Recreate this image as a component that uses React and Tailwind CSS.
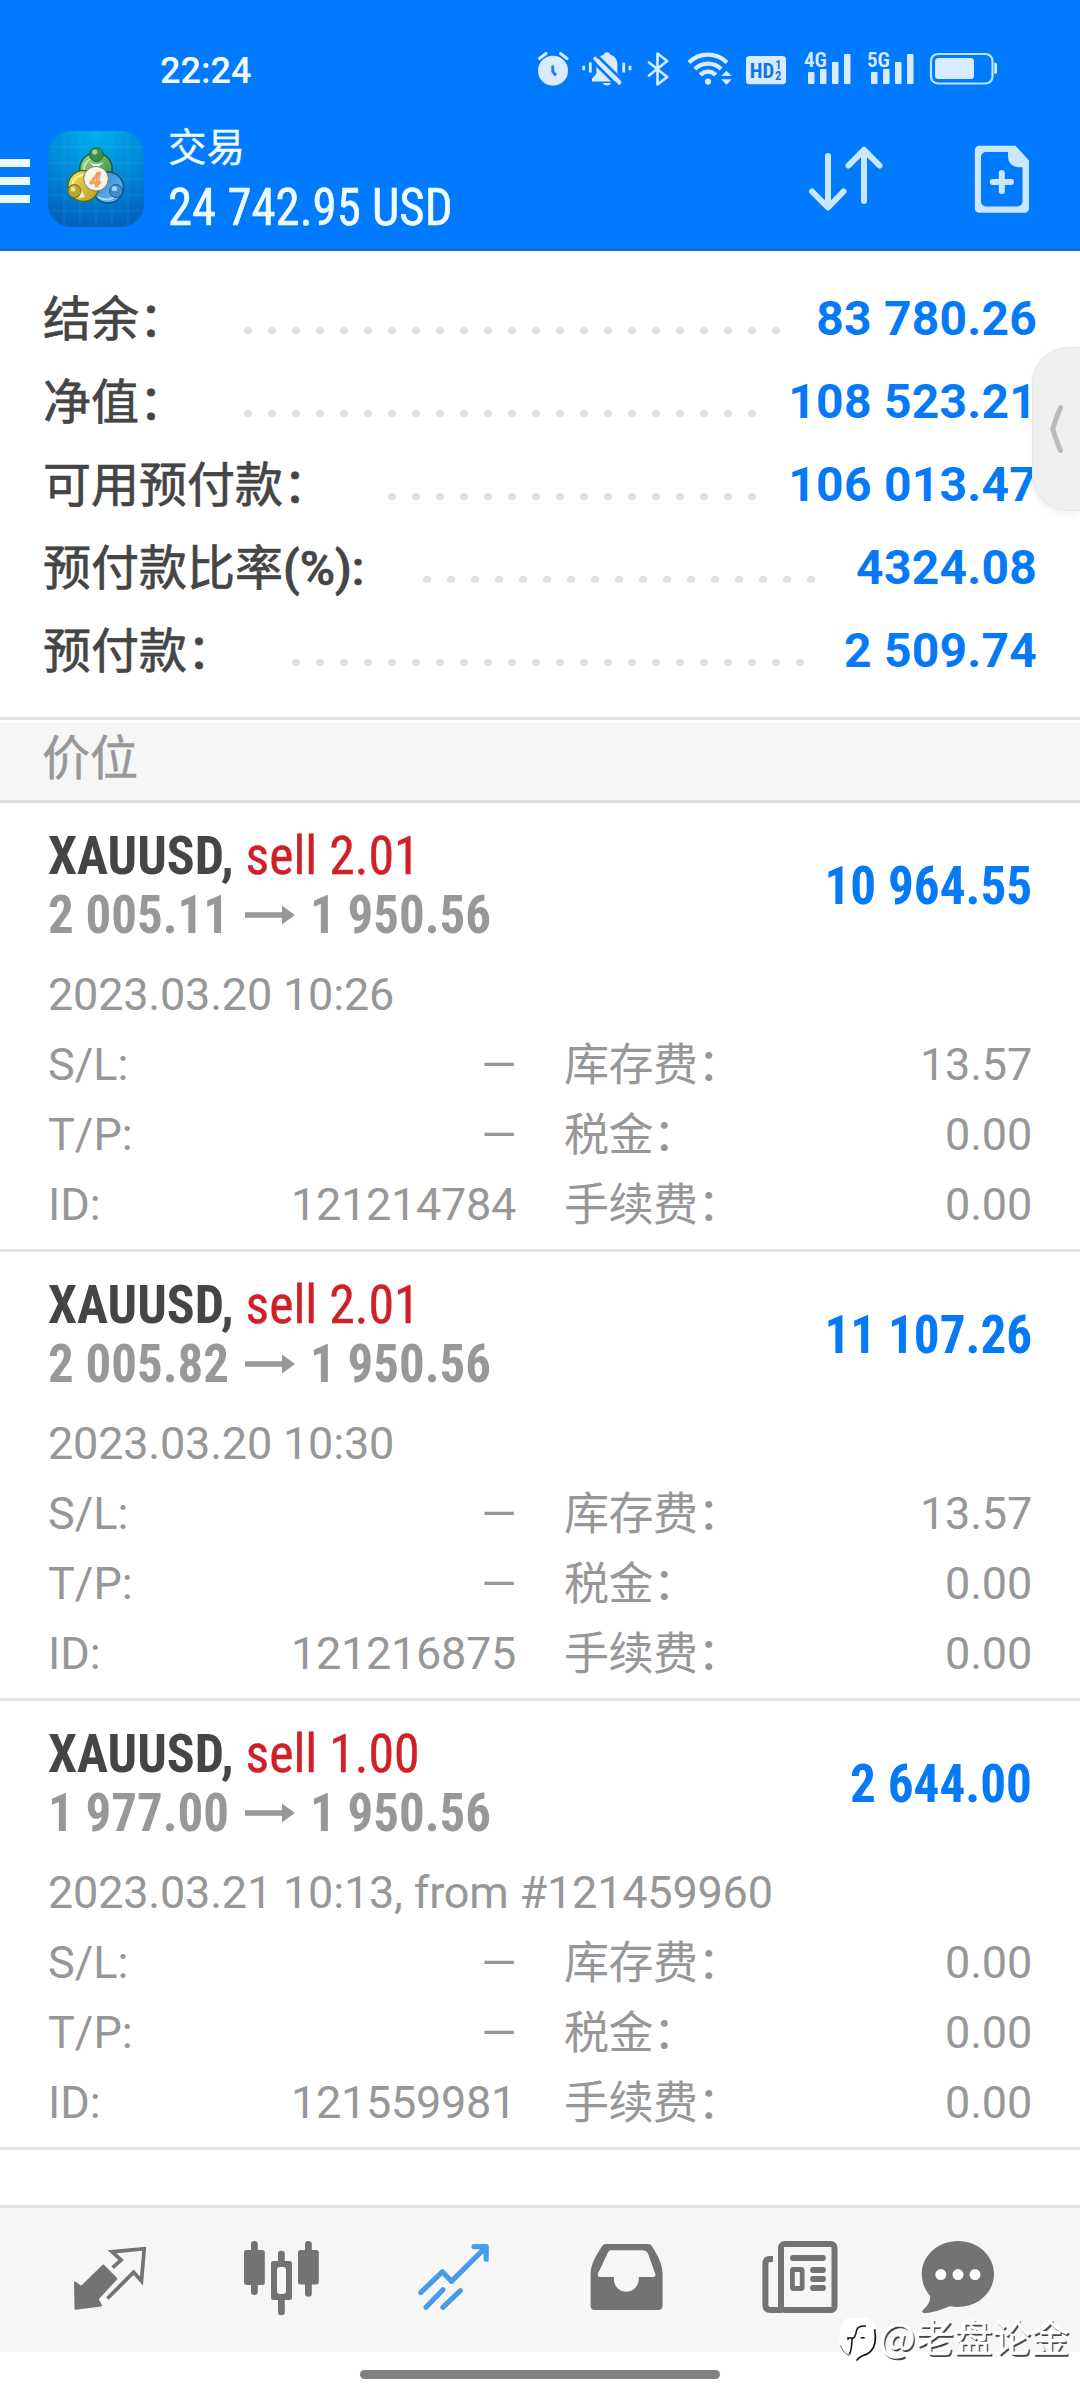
import { clsx } from 'clsx';

const summary = [
  { label: '结余', value: '83 780.26', dots: 23, offset: 'w-[193px]' },
  { label: '净值', value: '108 523.21', dots: 22, offset: 'w-[193px]' },
  { label: '可用预付款', value: '106 013.47', dots: 16, offset: 'w-[337px]' },
  { label: '预付款比率', suffix: '(%):', value: '4324.08', dots: 17, offset: 'w-[372px]' },
  { label: '预付款', value: '2 509.74', dots: 22, offset: 'w-[241px]' },
];

const positions = [
  {
    id: '121214784',
    symbol: 'XAUUSD',
    side: 'sell 2.01',
    open: '2 005.11',
    current: '1 950.56',
    profit: '10 964.55',
    time: '2023.03.20 10:26',
    swap: '13.57',
  },
  {
    id: '121216875',
    symbol: 'XAUUSD',
    side: 'sell 2.01',
    open: '2 005.82',
    current: '1 950.56',
    profit: '11 107.26',
    time: '2023.03.20 10:30',
    swap: '13.57',
  },
  {
    id: '121559981',
    symbol: 'XAUUSD',
    side: 'sell 1.00',
    open: '1 977.00',
    current: '1 950.56',
    profit: '2 644.00',
    time: '2023.03.21 10:13, from #121459960',
    swap: '0.00',
  },
];

const SignalIcon = ({ label, className }) => (
  <svg className={clsx('h-[52px] w-[50px]', className)} viewBox="-1 -6 50 52" fill="#d9ecff">
    <text x="0" y="17" fontSize="20.5" fontWeight="600" textLength="23" lengthAdjust="spacingAndGlyphs" className="font-['Roboto_Condensed']">
      {label}
    </text>
    <rect x="4" y="22" width="6.5" height="12" rx="1" />
    <rect x="16" y="19" width="6.5" height="15" rx="1" />
    <rect x="28" y="12" width="6.5" height="22" rx="1" />
    <rect x="40" y="4" width="6.5" height="30" rx="1" />
  </svg>
);

const StatusBar = () => (
  <div className="flex h-[102px] items-center pt-[38px]">
    <span className="ml-[160px] w-[378px] pt-[1px] text-[36px] leading-[48px] font-medium text-[#f2faff]">22:24</span>

    {/* Alarm */}
    <svg className="h-[40px] w-[31px]" viewBox="538 50 31 40" fill="none" stroke="#d9ecff" strokeLinecap="round">
      <circle cx="553" cy="70.7" r="15" fill="#d9ecff" stroke="none" />
      <path d="M539.5 58.5L546 53.5M560.5 53.5L567 58.5" strokeWidth="3" />
      <path d="M552.7 65.5V71.5L556 75.5" stroke="#1a7df0" strokeWidth="2.8" strokeLinecap="butt" />
    </svg>

    {/* Muted bell */}
    <svg className="ml-[13px] h-[40px] w-[50px]" viewBox="582 50 50 40" fill="#d9ecff">
      <path d="M607 52.3c1.8 0 3 1 3.2 2.3 4.4 1.4 7.2 5 7.2 9.8v8.8l4.4 5.6v2.7H592v-2.7l4.4-5.4v-9c0-4.8 3-8.4 7.4-9.8.3-1.3 1.4-2.3 3.2-2.3zM603 83h8c-.8 1.8-2 2.5-4 2.5s-3.2-.7-4-2.5z" />
      <path d="M592 60.5L619 87.5M595.5 54L623 81" stroke="#007aff" strokeWidth="2.5" />
      <path d="M594 57.5L620.5 84" stroke="#d9ecff" strokeWidth="3.2" />
      <path d="M583.7 65.8v4.4M590.3 62.5v10M623.7 62.5v10M630 65.8v4.4" stroke="#d9ecff" strokeWidth="2.8" />
    </svg>

    {/* Bluetooth */}
    <svg className="ml-[15px] h-[40px] w-[22px]" viewBox="646 50 22 40" fill="none" stroke="#d9ecff" strokeWidth="2.6" strokeLinejoin="round" strokeLinecap="round">
      <path d="M648 62.5L666.2 77L656.5 84.5V53.5L666.2 61L648 75.5" />
    </svg>

    {/* Wi-Fi */}
    <svg className="ml-[18px] h-[40px] w-[46px]" viewBox="686.5 50 46 40" fill="none" stroke="#d9ecff" strokeWidth="4.2">
      <path d="M688.5 62.5C699 52 715.5 52 726.5 62.5M694.3 69C701.5 61.7 713.5 61.7 720.7 69M699.8 75C704 70.4 711 70.4 715.2 75" />
      <circle cx="707.5" cy="81.6" r="3.1" fill="#d9ecff" stroke="none" />
      <path d="M726 70.7L731.2 76H720.8zM720.8 79.3H731.2L726 84.7z" fill="#d9ecff" stroke="none" />
    </svg>

    {/* HD voice */}
    <svg className="ml-[12px] h-[40px] w-[42px] font-['Roboto_Condensed']" viewBox="745 50 42 40" fill="#1374e4" fontWeight="700">
      <rect x="746" y="56" width="40" height="28.3" rx="3.5" fill="#d9ecff" />
      <text x="749.8" y="77.8" fontSize="21" textLength="24.5" lengthAdjust="spacingAndGlyphs">HD</text>
      <text x="775.3" y="69" fontSize="12">1</text>
      <text x="775" y="80.3" fontSize="12.5">2</text>
    </svg>

    <SignalIcon label="4G" className="ml-[16px]" />
    <SignalIcon label="5G" className="ml-[13px]" />

    {/* Battery */}
    <svg className="ml-[13px] h-[40px] w-[69px]" viewBox="929 50 69 40" fill="#d9ecff">
      <rect x="931" y="54" width="61.5" height="29.5" rx="7" fill="none" stroke="#bfe4ff" strokeWidth="2.2" />
      <rect x="935" y="58" width="39" height="21" rx="3.5" />
      <path d="M994.3 62.7h1.2a1.5 1.5 0 0 1 1.5 1.5v8a1.5 1.5 0 0 1-1.5 1.5h-1.2z" />
    </svg>
  </div>
);

const AppLogo = () => (
  <svg className="ml-[18px] mt-[29px] h-[96px] w-[96px]" viewBox="0 0 96 96">
    <defs>
      <radialGradient id="tile" cx="0.5" cy="0" r="1">
        <stop offset="0" stopColor="#00b0ee" />
        <stop offset="0.55" stopColor="#0088d6" />
        <stop offset="1" stopColor="#0063bd" />
      </radialGradient>
      <linearGradient id="green" x1="0" y1="0" x2="1" y2="1">
        <stop offset="0" stopColor="#a6d98f" />
        <stop offset="1" stopColor="#1f8a35" />
      </linearGradient>
      <linearGradient id="yellow" x1="0" y1="0" x2="1" y2="1">
        <stop offset="0" stopColor="#f0e75a" />
        <stop offset="1" stopColor="#b59a1b" />
      </linearGradient>
      <linearGradient id="blue" x1="0" y1="0" x2="1" y2="1">
        <stop offset="0" stopColor="#2b86cf" />
        <stop offset="1" stopColor="#6dbcf0" />
      </linearGradient>
    </defs>
    <rect width="96" height="96" rx="23" fill="url(#tile)" />
    <path
      d="M16 2v92M32 0v96M48 0v96M64 0v96M80 2v92M2 16h92M0 32h96M0 48h96M0 64h96M2 80h92"
      stroke="#5cc4f5"
      strokeOpacity="0.16"
      strokeWidth="1"
    />
    <circle cx="48" cy="38" r="16.3" fill="url(#green)" stroke="#1c5f3c" strokeWidth="1.5" />
    <path d="M36 42a13 13 0 0 1 6-14" fill="none" stroke="#c4e8b4" strokeWidth="2" />
    <path d="M41 31q7 4 15 0l-8 7z" fill="#dff3e6" />
    <circle cx="60" cy="56.5" r="15.5" fill="url(#blue)" stroke="#12527f" strokeWidth="1.5" />
    <path d="M50 66q10 6 19-2" fill="none" stroke="#a8daf8" strokeWidth="2" />
    <circle cx="35.5" cy="55" r="15.5" fill="url(#yellow)" stroke="#5b6428" strokeWidth="1.5" />
    <path d="M24 54a12 12 0 0 1 11-10" fill="none" stroke="#fbf6a8" strokeWidth="2" />
    <path d="M33 58l4 8-6 1z" fill="#f6f3cf" />
    <path d="M62 56h7l-6 6z" fill="#d8eefb" />
    <circle cx="48.5" cy="23.5" r="6.8" fill="#3f8f46" stroke="#1d6136" />
    <circle cx="46.8" cy="21" r="2.6" fill="#a9d79b" />
    <circle cx="26.5" cy="60" r="6.5" fill="#b8a32b" stroke="#776f22" />
    <circle cx="25" cy="58" r="2.6" fill="#e8df86" />
    <circle cx="68" cy="60" r="6.5" fill="#3f8fd0" stroke="#165c95" />
    <circle cx="66.5" cy="57.5" r="2.6" fill="#a3d4f5" />
    <circle cx="48" cy="47.7" r="12.3" fill="#f6f2ee" stroke="#6d6a4a" strokeWidth="0.8" />
    <text x="47.5" y="55.5" textAnchor="middle" fontSize="21" fontStyle="italic" fontWeight="700" fill="#f6b070" stroke="#ea8a35" strokeWidth="0.6">
      4
    </text>
  </svg>
);

const Header = () => (
  <header className="h-[251px] border-b-[3px] border-[#1670cb] bg-[#007aff]">
    <StatusBar />
    <div className="flex h-[146px]">
      {/* Menu */}
      <div className="mt-[57px] flex w-[30px] flex-col gap-[10px]">
        <div className="h-[8px] bg-[#ebf8ff]" />
        <div className="h-[8px] bg-[#ebf8ff]" />
        <div className="h-[8px] bg-[#ebf8ff]" />
      </div>
      <AppLogo />
      <div className="ml-[24px] mt-[19px] flex-1 text-[#f0fbff]">
        <h1 className="text-[38.5px] leading-[54px] [-webkit-text-stroke:0.3px_#f0fbff]">交易</h1>
        <div className="mt-[1px] origin-left scale-x-[0.957] font-['Roboto_Condensed'] text-[51px] leading-[64px] whitespace-nowrap [-webkit-text-stroke:0.6px_#f0fbff]">
          24 742.95 USD
        </div>
      </div>
      <svg className="mt-[43px] h-[68px] w-[76px]" viewBox="808 145 76 68" fill="none" stroke="#cbe6ff" strokeWidth="6" strokeLinecap="round" strokeLinejoin="round">
        <path d="M828 156V206.5M812 191.5L828 207.5L843.5 191.5" />
        <path d="M864 201V150.5M848.5 165.5L864 149.8L879.5 165.5" />
      </svg>
      <svg className="mr-[50px] ml-[90px] mt-[42px] h-[70px] w-[56px]" viewBox="974 144 56 70" fill="none" stroke="#cbe6ff" strokeWidth="6" strokeLinecap="round">
        <path
          fillRule="evenodd"
          d="M979 145.7H1015.5L1029 160.5V208.5a4.2 4.2 0 0 1-4.2 4.2H979a4.2 4.2 0 0 1-4.2-4.2V150a4.2 4.2 0 0 1 4.2-4.3zM986 152a5 5 0 0 0-5 5V201.5a5 5 0 0 0 5 5H1017.5a5 5 0 0 0 5-5V167.3H1018.5a10.5 10.5 0 0 1-10.5-10.5V152z"
          fill="#cbe6ff"
          stroke="none"
        />
        <path d="M1001.8 173V191M992.8 182H1011" />
      </svg>
    </div>
  </header>
);

const SummaryRow = ({ label, suffix, value, dots, offset }) => (
  <div className="flex h-[83px] leading-[83px]">
    <div className={clsx('mt-[1px] shrink-0 whitespace-nowrap text-[#454545] [-webkit-text-stroke:0.7px_#454545]', offset)}>
      {suffix ? label : `${label}：`}
      {suffix && <span className="font-medium">{suffix}</span>}
    </div>
    <div className="flex pt-[49.5px]">
      {Array.from({ length: dots }, (_, i) => (
        <div key={i} className="flex h-[8px] w-[24px] justify-center">
          <div className="h-[7.5px] w-[7.5px] rounded-full bg-[#e0e0e0]" />
        </div>
      ))}
    </div>
    <div className="flex-1 text-right font-bold tracking-[0.25px] whitespace-nowrap text-[#0579f6]">{value}</div>
  </div>
);

const Field = ({ label, value }) => (
  <div className="flex justify-between">
    <span>{label}</span>
    <span className="tracking-[-0.3px]">{value}</span>
  </div>
);

const Fee = ({ label, value }) => (
  <div className="flex justify-between">
    <span className="pt-[1px] pl-[1px] tracking-[-0.5px]">{label}：</span>
    <span className="tracking-[-0.2px]">{value}</span>
  </div>
);

const Position = ({ position }) => (
  <article className="h-[449px] border-b-[3px] border-[#e3e3e3] px-[48px] pt-[23px]">
    <div className="flex items-center justify-between font-['Roboto_Condensed'] text-[54px] leading-[59px]">
      <div>
        <div className="origin-left scale-x-[0.96]">
          <span className="font-bold text-[#454545]">{position.symbol},</span>{' '}
          <span className="text-[#d02026] [-webkit-text-stroke:0.4px_#d02026]">{position.side}</span>
        </div>
        <div className="flex h-[59px] items-center font-bold text-[#98989b]">
          <span className="w-[197px] origin-left scale-x-[0.943]">{position.open}</span>
          <svg className="h-[20px] w-[50px]" viewBox="0 0 50 20" fill="#98989b">
            <path d="M0 7.3H37V0.5L50 10L37 19.5V12.7H0z" />
          </svg>
          <span className="ml-[15px] origin-left scale-x-[0.943]">{position.current}</span>
        </div>
      </div>
      <div className="origin-right scale-x-[0.948] font-bold text-[#0579f6]">{position.profit}</div>
    </div>
    <div className="mt-[16px] text-[45px] leading-[70px] text-[#979797]">
      <div className="tracking-[-0.2px]">{position.time}</div>
      <div className="grid h-[210px] grid-cols-[468px_469px] grid-rows-3 gap-x-[47px]">
        <Field label="S/L:" value="—" />
        <Fee label="库存费" value={position.swap} />
        <Field label="T/P:" value="—" />
        <Fee label="税金" value="0.00" />
        <Field label="ID:" value={position.id} />
        <Fee label="手续费" value="0.00" />
      </div>
    </div>
  </article>
);

const BottomNav = () => (
  <nav className="flex h-[147px] border-t-[3px] border-[#e2e2e2] bg-[#f6f6f6] pl-[24px]">
    {/* Quotes */}
    <svg className="h-[144px] w-[173px]" viewBox="24 18 173 144" fill="none" stroke="#737373">
      <path d="M103.3 75.5L116.3 88.8L97.5 109L101 115.5L75.5 118.8L75 92.5L81.3 97z" fill="#737373" strokeWidth="2" strokeLinejoin="round" />
      <path d="M112.6 77.7L121.2 70L112 61.8L144.2 58.7L141.5 91L133.6 82.3L107.4 108.5" strokeWidth="3.7" />
    </svg>
    {/* Charts */}
    <svg className="h-[144px] w-[173px]" viewBox="197 18 173 144" fill="#737373">
      <rect x="251" y="51" width="6.8" height="54" rx="3.3" />
      <rect x="244" y="60" width="20.8" height="35" rx="2.5" />
      <rect x="278" y="60.7" width="6.8" height="64.5" rx="3.3" />
      <rect x="271" y="71" width="21" height="39" rx="2.5" />
      <rect x="277" y="77" width="9" height="27" rx="3" fill="#f8f8f8" />
      <rect x="305" y="51" width="6.8" height="55.7" rx="3.3" />
      <rect x="298" y="60" width="20.8" height="34.5" rx="2.5" />
    </svg>
    {/* Trade */}
    <svg className="h-[144px] w-[173px]" viewBox="370 18 173 144" fill="none" stroke="#489beb" strokeWidth="5.2" strokeLinecap="round" strokeLinejoin="round">
      <path d="M420.8 102.5L442.3 81.8L451.4 91.3L485.5 57.5" />
      <path d="M474 56.6H486.2V69.2" />
      <path d="M443 99.8L426 117.3M460.4 100.7L442.8 117.3" />
    </svg>
    {/* History */}
    <svg className="h-[144px] w-[173px]" viewBox="543 18 173 144" fill="#737373">
      <path
        fillRule="evenodd"
        d="M606 54H648Q650.5 54 652 56.3C657 64 662.6 74 662.6 84V115.5Q662.6 120 658 120H595Q590.6 120 590.6 115.5V84C590.6 74 597 64 602 56.3Q603.5 54 606 54zM611 60.3Q609 60.3 608 62.3L598 83.5Q597 87 600.5 87H613.8V88.5C613.8 96 619 101.7 626.3 101.7S638.8 96 638.8 88.5V87H653.5Q656 87 655.3 84L648 63.5Q646 60.3 642.5 60.3z"
      />
    </svg>
    {/* News */}
    <svg className="h-[144px] w-[173px]" viewBox="716 18 173 144" fill="none" stroke="#737373" strokeWidth="6">
      <rect x="781" y="54" width="53.5" height="66" rx="3.5" />
      <path d="M773 69H769.5Q765.4 69 765.4 74V115Q765.4 120 770.5 120H782" />
      <path d="M793 68H822.8" strokeLinecap="round" />
      <rect x="792.4" y="79.5" width="9.8" height="19" rx="1" strokeWidth="4.8" />
      <path d="M813 80H823M813 89H823M813 98H823" strokeLinecap="round" strokeWidth="5.8" />
    </svg>
    {/* Messages */}
    <svg className="h-[144px] w-[173px]" viewBox="889 18 173 144" fill="#737373">
      <path d="M957.9 51C978 51 994 65.5 994 84S978 117 957.9 117C955 117 952 116.6 949.8 116.2C943 118.5 936 122.5 925 123C922 123 921.3 121.3 923.5 119.5C928 115.5 930.5 111 930.2 106C925 100 921.8 92.5 921.8 84C921.8 65.5 938 51 957.9 51z" />
      <g fill="#ffffff">
        <circle cx="940.8" cy="84.6" r="5.5" />
        <circle cx="958" cy="84.6" r="5.5" />
        <circle cx="975" cy="84.6" r="5.5" />
      </g>
    </svg>
  </nav>
);

const App = () => {
  return (
    <div className="relative flex h-[2400px] w-[1080px] flex-col overflow-hidden bg-white font-['Roboto','Noto_Sans_CJK_SC',sans-serif]">
      <Header />

      <section className="h-[469px] border-b-[3px] border-[#e3e3e3] px-[43px] pt-[26px] text-[48px]">
        {summary.map((row) => (
          <SummaryRow key={row.label} {...row} />
        ))}
      </section>

      <h2 className="mt-[3px] h-[80px] border-b-[3px] border-[#dedede] bg-[#f6f6f6] pl-[42px] text-[48px] leading-[72px] text-[#98989a] [-webkit-text-stroke:0.5px_#98989a]">
        价位
      </h2>

      <main className="flex-1">
        {positions.map((position) => (
          <Position key={position.id} position={position} />
        ))}
      </main>

      <BottomNav />

      {/* Gesture bar */}
      <div className="flex h-[48px] justify-center pt-[18px]">
        <div className="h-[9px] w-[360px] rounded-full bg-[#7f7f7f]" />
      </div>

      {/* Edge panel handle */}
      <div className="absolute top-[347px] right-0 flex h-[164px] w-[48px] items-center rounded-l-[36px] border border-r-0 border-[#e6e6e6] bg-[#f0f0f0] shadow-[0_3px_6px_rgba(0,0,0,0.06)]">
        <svg className="ml-[16px] h-[54px] w-[16px]" viewBox="0 0 16 54" fill="none" stroke="#bbbbbb" strokeWidth="5" strokeLinecap="round" strokeLinejoin="round">
          <path d="M11.5 5.5Q7 16 3.7 27Q7 38 11.5 48.5" />
        </svg>
      </div>

      {/* Watermark */}
      <div className="absolute top-[2308px] left-[838px] flex h-[54px] items-center">
        <svg className="h-[54px] w-[44px]" viewBox="24 0 132 162" fill="none" stroke="#111111">
          <path d="M58 30H104Q140 34 138 80Q138 120 100 142L80 160L78 146L58 144Q28 130 28 90Q28 34 58 30z" fill="#ffffff" stroke="none" />
          <path d="M108 54Q84 52 80 66Q76 88 70 90H54V96M66 92Q66 122 58 140M92 89H104" strokeWidth="4.5" />
          <path d="M134 64Q142 110 122 130Q112 140 96 144Q86 148 80 158" strokeWidth="5" />
          <path d="M32 112Q38 134 58 143" strokeWidth="2" />
        </svg>
        <span className="-ml-[3px] font-['Noto_Sans_CJK_SC'] text-[38.5px] leading-[50px] whitespace-nowrap text-white [-webkit-text-stroke:0.5px_#ffffff] [text-shadow:1.5px_1.5px_0.5px_#444444]">
          @老盘论金
        </span>
      </div>
    </div>
  );
};

export default App;
